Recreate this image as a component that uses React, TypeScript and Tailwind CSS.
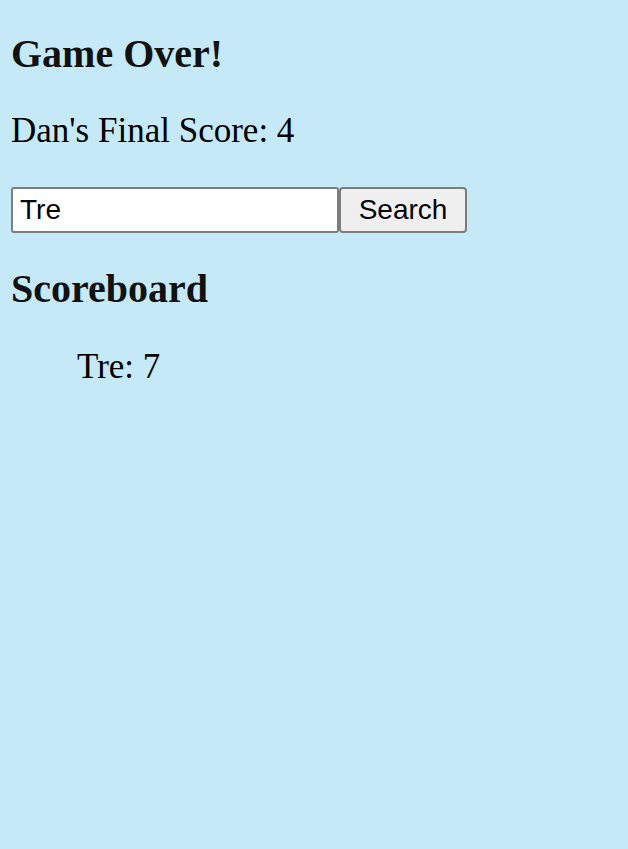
import { useState } from "react";

interface Score {
  name: string;
  score: number;
}

const scores: Score[] = [{ name: "Tre", score: 7 }];

export default function App() {
  const [query, setQuery] = useState("Tre");

  return (
    <div className="min-h-screen bg-[#c5e9f6] pl-[11px] pt-[31px] text-black font-['Liberation_Serif','Times_New_Roman',serif]">
      <h2 className="text-[40px] leading-[45px] font-bold text-[#111] mb-[35px]">Game Over!</h2>
      <p className="text-[35px] leading-[40px] mb-[36px]">Dan's Final Score: 4</p>

      <div className="flex items-stretch h-[46px] mb-[33px] font-['Liberation_Sans',Arial,sans-serif]">
        <input
          value={query}
          onChange={(e) => setQuery(e.target.value)}
          className="w-[328px] h-full bg-white border-2 border-[#7d7d7d] rounded-[3px] px-[7px] text-[28px] text-black outline-none"
        />
        <button className="w-[128px] h-full bg-[#efefef] border-2 border-[#7d7d7d] rounded-[4px] text-[28px] text-black flex items-center justify-center">
          Search
        </button>
      </div>

      <h2 className="text-[40px] leading-[45px] font-bold text-[#111] mb-[36px]">Scoreboard</h2>
      <ul className="pl-[66px] list-none">
        {scores.map((s) => (
          <li key={s.name} className="text-[35px] leading-[40px]">
            {s.name}: {s.score}
          </li>
        ))}
      </ul>
    </div>
  );
}
